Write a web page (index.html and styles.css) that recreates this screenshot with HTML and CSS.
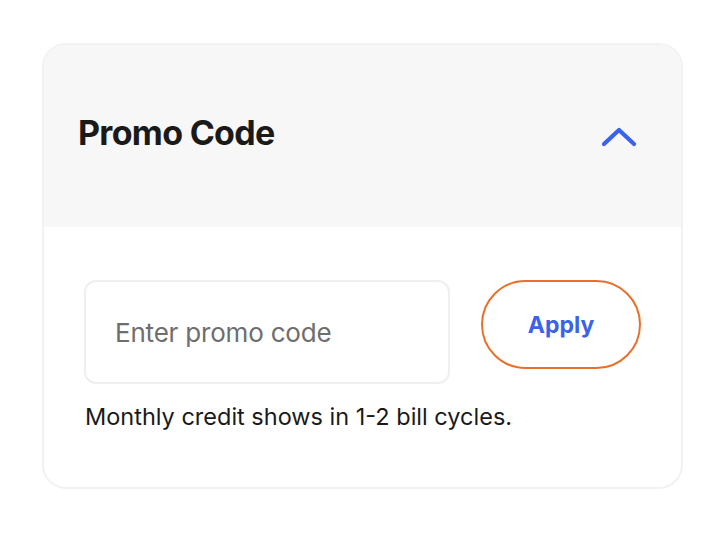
FILE: index.html
```html
<!DOCTYPE html>
<html lang="en">
<head>
  <meta charset="UTF-8">
  <meta name="viewport" content="width=device-width, initial-scale=1.0">
  <title>Promo Code</title>
  <link rel="stylesheet" href="styles.css">
</head>
<body>
  <div class="card">
    <div class="card-header">
      <h2 class="title">Promo Code</h2>
      <button class="toggle" aria-label="Collapse">
        <svg width="36" height="22" viewBox="0 0 36 22">
          <path d="M3 19 L18 5 L33 19" fill="none" stroke="#3b62ea" stroke-width="4.2" stroke-linecap="round" stroke-linejoin="round"/>
        </svg>
      </button>
    </div>
    <div class="card-body">
      <form class="promo-form">
        <input type="text" class="promo-input" placeholder="Enter promo code">
        <button type="submit" class="apply-btn">Apply</button>
      </form>
      <p class="note">Monthly credit shows in 1-2 bill cycles.</p>
    </div>
  </div>
</body>
</html>
```

FILE: styles.css
```css
body {
  margin: 0;
  background-color: white;
  font-family: Inter, "Noto Sans", sans-serif;
}
.card {
  width: 641px;
  height: 446px;
  margin: 43px 0 0 42px;
  box-sizing: border-box;
  border: 2px solid #f2f2f2;
  border-radius: 24px;
  overflow: hidden;
  background-color: white;
}
.card-header {
  height: 182px;
  background-color: #f7f7f7;
  display: flex;
  align-items: center;
  justify-content: space-between;
  padding: 0 44px 0 34px;
}
.title {
  margin: 0 0 8px 0;
  font-size: 34px;
  font-weight: 700;
  letter-spacing: -0.7px;
  color: #1a1a1a;
}
.toggle {
  background: none;
  border: none;
  padding: 0;
  display: flex;
}
.card-body {
  padding: 53px 40px 0 40px;
}
.promo-form {
  display: flex;
  align-items: flex-start;
  gap: 31px;
}
.promo-input {
  width: 366px;
  height: 104px;
  box-sizing: border-box;
  border: 2px solid #efefef;
  border-radius: 12px;
  padding: 0 29px;
  font-family: inherit;
  font-size: 26px;
  letter-spacing: -0.2px;
  color: #333;
  outline: none;
}
.promo-input::placeholder {
  color: #6e6e6e;
}
.apply-btn {
  width: 160px;
  height: 89px;
  box-sizing: border-box;
  border: 2.5px solid #e8702a;
  border-radius: 45px;
  background: white;
  color: #3b62ea;
  font-family: inherit;
  font-size: 23px;
  font-weight: 700;
}
.note {
  margin: 18px 0 0 1px;
  font-size: 23.5px;
  letter-spacing: 0px;
  color: #1a1a1a;
}
```
